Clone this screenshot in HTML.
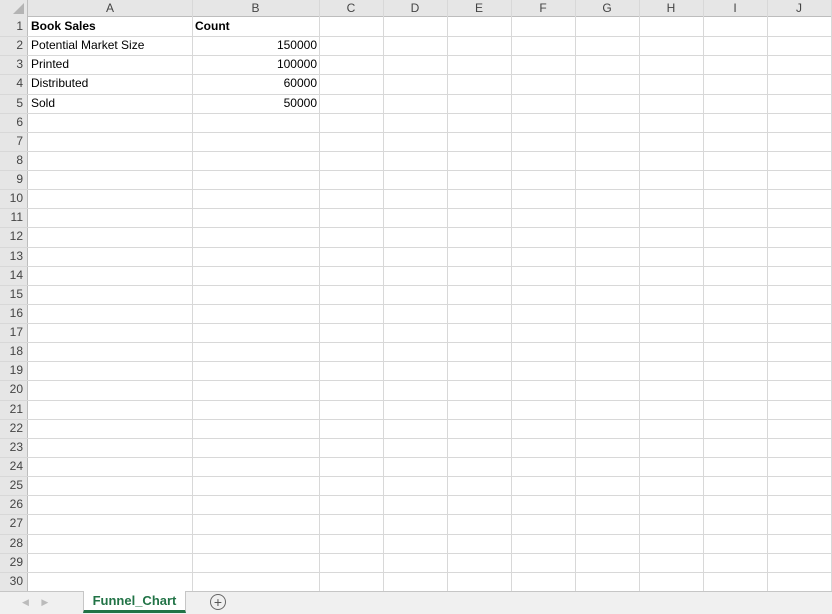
<!DOCTYPE html><html><head><style>
body{margin:0;width:832px;height:613px;overflow:hidden;background:#fff;font-family:"Liberation Sans",sans-serif;font-size:12px;position:relative}
.h{position:absolute;background:#e6e6e6;color:#444;text-align:center;box-sizing:border-box}
.l{position:absolute;background:#d8d8d8}
.t{position:absolute;color:#000;white-space:nowrap;line-height:19px}
</style></head><body>
<div id="g"></div>
<script>
(function(){
var g=document.getElementById('g'),s='';
var cols=[28,192,319,383,447,511,575,639,703,767,831],names='ABCDEFGHIJ';
var y0=17,rh=19.13;
s+='<div class="h" style="left:0;top:0;width:832px;height:17px;border-bottom:1px solid #bdbdbd"></div>';
s+='<div class="h" style="left:0;top:0;width:28px;height:591px;border-right:1px solid #bdbdbd"></div>';
s+='<div style="position:absolute;left:13px;top:3px;width:0;height:0;border-left:11px solid transparent;border-bottom:11px solid #b4b4b4"></div>';
for(var i=0;i<10;i++){var x=cols[i],w=cols[i+1]-x;
s+='<div class="t" style="left:'+x+'px;top:-1px;width:'+w+'px;text-align:center;color:#444">'+names[i]+'</div>';
s+='<div class="l" style="left:'+cols[i+1]+'px;top:0;width:1px;height:591px"></div>';}
for(var r=1;r<=30;r++){var y=y0+rh*r;
s+='<div class="l" style="left:0;top:'+Math.round(y)+'px;width:832px;height:1px"></div>';
s+='<div class="t" style="left:0;top:'+Math.round(y-rh)+'px;width:23px;text-align:right;color:#444">'+r+'</div>';}
var d=[['<b>Book Sales</b>','<b>Count</b>',0],['Potential Market Size','150000',1],['Printed','100000',1],['Distributed','60000',1],['Sold','50000',1]];
d.forEach(function(a,i){var y=Math.round(y0+rh*i);
s+='<div class="t" style="left:31px;top:'+y+'px">'+a[0]+'</div>';
s+=a[2]?'<div class="t" style="left:192px;width:125px;text-align:right;top:'+y+'px">'+a[1]+'</div>':'<div class="t" style="left:195px;top:'+y+'px">'+a[1]+'</div>';});
g.innerHTML=s;
})();
</script>
<div style="position:absolute;left:0;top:591px;width:832px;height:22px;background:#f0f0f0;border-top:1px solid #c6c6c6"></div>
<div style="position:absolute;left:22px;top:597px;color:#bbb;font-size:9px">&#9664;&nbsp;&nbsp;&nbsp;&nbsp;&nbsp;&#9654;</div>
<div style="position:absolute;left:83px;top:591px;width:101px;height:19px;background:#fff;border-bottom:3px solid #217346;border-left:1px solid #c6c6c6;border-right:1px solid #c6c6c6;color:#217346;font-weight:bold;font-size:13px;text-align:center;line-height:19px">Funnel_Chart</div>
<div style="position:absolute;left:210px;top:594px;width:14px;height:14px;border:1px solid #666;border-radius:50%;text-align:center;line-height:14px;color:#555;font-size:14px">+</div>
</body></html>
